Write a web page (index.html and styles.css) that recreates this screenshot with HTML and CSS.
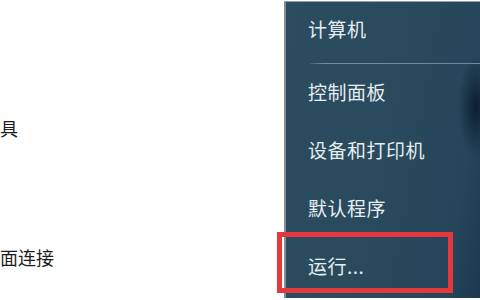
FILE: index.html
```html
<!DOCTYPE html>
<html lang="zh-CN">
<head>
<meta charset="utf-8">
<link rel="stylesheet" href="styles.css">
</head>
<body>
<div class="screen">
  <div class="left">
    <div class="left-item first">具</div>
    <div class="left-item second">面连接</div>
  </div>
  <div class="panel">
    <div class="item">计算机</div>
    <div class="sep"></div>
    <div class="item">控制面板</div>
    <div class="item">设备和打印机</div>
    <div class="item">默认程序</div>
    <div class="item">运行...</div>
  </div>
  <div class="highlight"></div>
</div>
</body>
</html>
```
FILE: styles.css
```css
html, body {
  margin: 0;
  padding: 0;
  background: #ffffff;
}
.screen {
  position: relative;
  width: 480px;
  height: 300px;
  overflow: hidden;
  display: flex;
  font-family: "Noto Sans CJK SC", "Microsoft YaHei", sans-serif;
}
.left {
  width: 284px;
  flex: none;
  background: #ffffff;
  display: flex;
  flex-direction: column;
  overflow: hidden;
}
.left-item {
  font-size: 18px;
  line-height: 24px;
  color: #1c1c1c;
  white-space: nowrap;
}
.left-item.first {
  margin-top: 116px;
}
.left-item.second {
  margin-top: 105px;
}
.panel {
  flex: 1;
  height: 296px;
  margin-top: 1px;
  border-left: 2px solid #808f98;
  border-top: 1px solid #8fa2ad;
  display: flex;
  flex-direction: column;
  background:
    radial-gradient(ellipse 18px 50px at 190px 105px, rgba(8, 24, 40, 0.85), rgba(8, 24, 40, 0) 100%),
    linear-gradient(100deg, #2c4c60 0%, #294a5d 55%, #25455a 85%, #1d394f 100%);
}
.item {
  height: 58px;
  flex: none;
  display: flex;
  align-items: center;
  padding-left: 22px;
  padding-bottom: 6px;
  box-sizing: border-box;
  font-size: 19px;
  color: #e6edf1;
  letter-spacing: 0.5px;
}
.sep {
  flex: none;
  height: 1px;
  margin: 3px 0 1px 24px;
  background: linear-gradient(to right, rgba(110, 145, 165, 0.3), #6d8fa2 8%, #6a8b9e 100%);
}
.highlight {
  position: absolute;
  left: 277px;
  top: 232px;
  width: 166px;
  height: 51px;
  border: 5px solid #e4383c;
}
```
